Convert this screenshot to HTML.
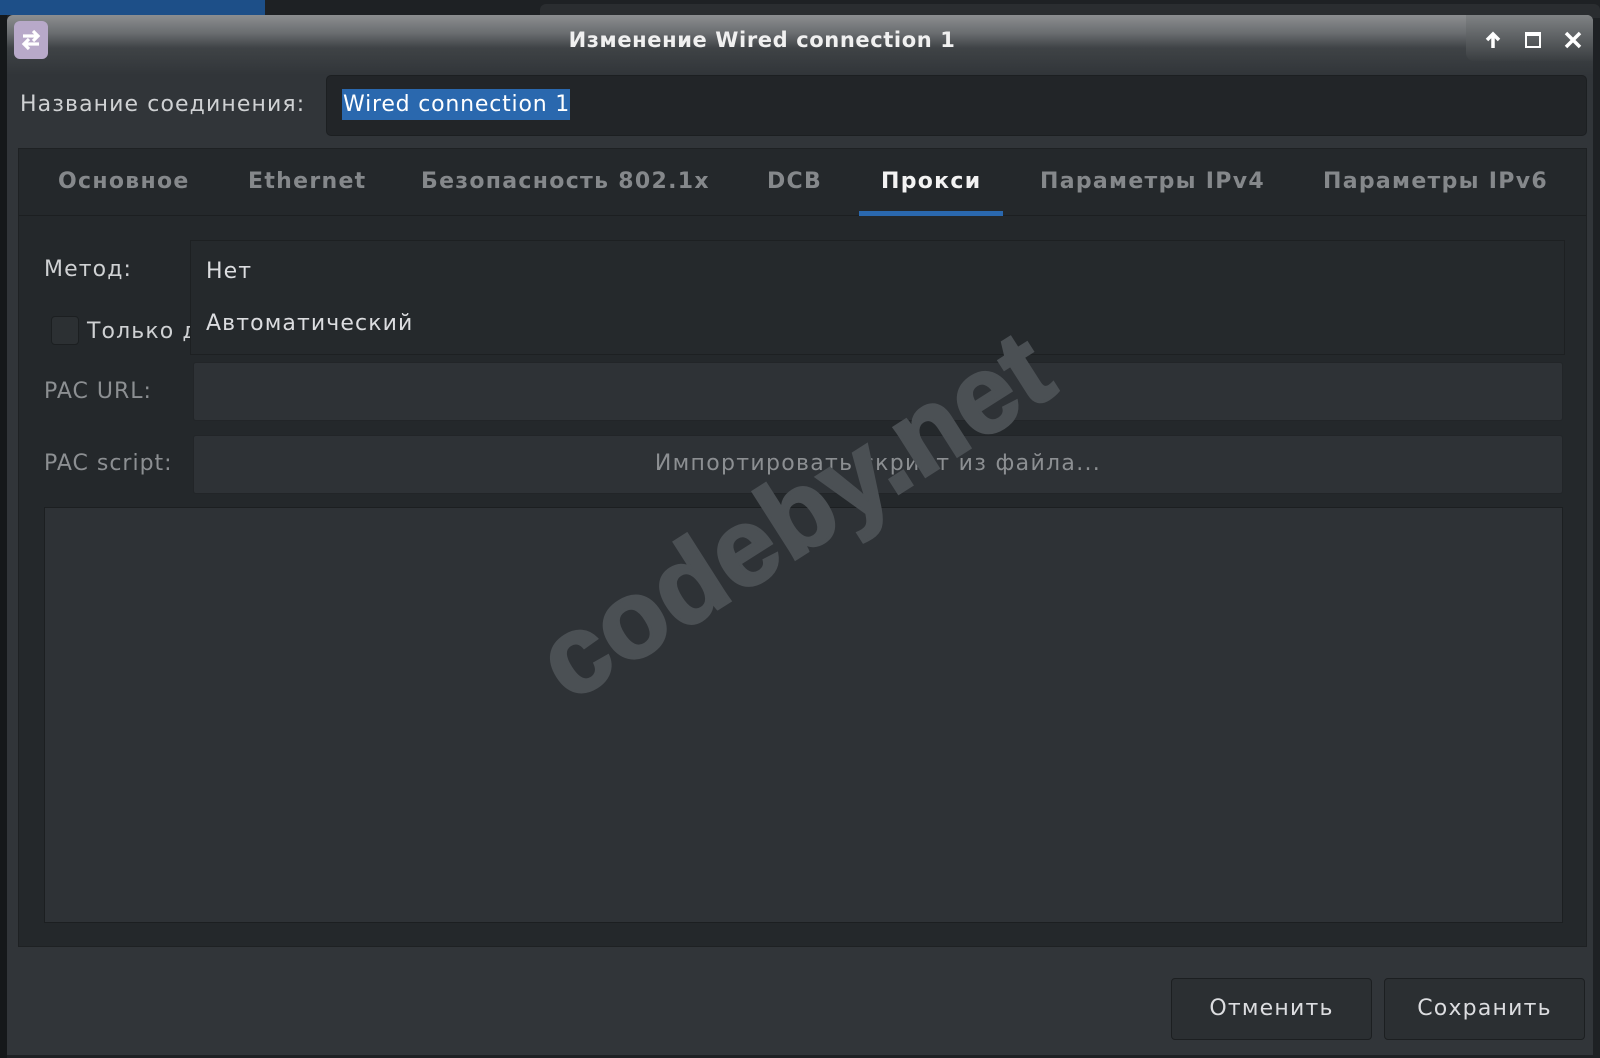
<!DOCTYPE html>
<html><head><meta charset="utf-8"><style>
*{box-sizing:border-box;margin:0;padding:0}
body{width:1600px;height:1058px;overflow:hidden;background:#1e2124;font-family:"DejaVu Sans","Liberation Sans",sans-serif;position:relative}
.a{position:absolute}
.lbl{color:#cfd1d3;font-size:22px;letter-spacing:1.1px}
.dim{color:#8c8f92;font-size:22px;letter-spacing:1px}
.tab{position:absolute;top:169px;font-size:22px;font-weight:bold;color:#85888b;letter-spacing:1.3px}
</style></head><body>
<div class="a" style="left:0;top:0;width:265px;height:15px;background:#1d4f88"></div>
<div class="a" style="left:540px;top:4px;width:1060px;height:14px;background:#2a2d30;border-radius:6px 6px 0 0"></div>
<div class="a" style="left:0;top:15px;width:7px;height:1043px;background:#15181a"></div>
<div class="a" style="left:7px;top:15px;width:1586px;height:1040px;background:#313539;border-radius:6px 6px 0 0"></div>
<div class="a" style="left:7px;top:15px;width:1586px;height:60px;background:linear-gradient(#8c8e90 0,#6a6d70 30%,#3f4346 55%,#313539 100%);border-radius:6px 6px 0 0"></div>
<div class="a" style="left:1466px;top:15px;width:127px;height:46px;background:linear-gradient(#7f8284,#3a3e41);border-radius:0 6px 0 8px"></div>
<div class="a" style="left:14px;top:21px;width:34px;height:38px;background:#b8a9c9;border-radius:6px"></div>
<svg class="a" style="left:17px;top:26px" width="28" height="28" viewBox="0 0 28 28"><path d="M6 10h14M16 5l5 5-5 5M22 18H8M12 13l-5 5 5 5" stroke="#fff" stroke-width="3.2" fill="none"/></svg>
<div class="a" style="left:0;width:1524px;top:28px;text-align:center;color:#f0f0f0;font-weight:bold;font-size:21px;letter-spacing:0.6px">Изменение Wired connection 1</div>
<svg class="a" style="left:1483px;top:30px" width="20" height="20" viewBox="0 0 20 20"><path d="M10 18V5M4 10l6-6 6 6" stroke="#fff" stroke-width="3.5" fill="none"/></svg>
<div class="a" style="left:1525px;top:32px;width:16px;height:16px;border:2px solid #fff;border-top-width:4px"></div>
<svg class="a" style="left:1563px;top:30px" width="20" height="20" viewBox="0 0 20 20"><path d="M3 3l14 14M17 3L3 17" stroke="#fff" stroke-width="3.5"/></svg>

<div class="a lbl" style="left:20px;top:92px">Название соединения:</div>
<div class="a" style="left:326px;top:75px;width:1261px;height:61px;background:#222528;border:1px solid #1c1f21;border-radius:5px"></div>
<div class="a" style="left:342px;top:89px;width:228px;height:31px;background:#2a68ae"></div>
<div class="a" style="left:343px;top:92px;color:#fff;font-size:22px;letter-spacing:0.8px">Wired connection 1</div>

<div class="a" style="left:18px;top:148px;width:1569px;height:799px;background:#24282b;border:1px solid #1e2123"></div>
<div class="a" style="left:19px;top:215px;width:1567px;height:1px;background:#1c1f21"></div>
<div class="tab" style="left:58px">Основное</div>
<div class="tab" style="left:248px">Ethernet</div>
<div class="tab" style="left:421px">Безопасность 802.1x</div>
<div class="tab" style="left:767px">DCB</div>
<div class="tab" style="left:881px;color:#f3f3f3">Прокси</div>
<div class="tab" style="left:1040px">Параметры IPv4</div>
<div class="tab" style="left:1323px">Параметры IPv6</div>
<div class="a" style="left:859px;top:211px;width:144px;height:5px;background:#2a68ae"></div>

<div class="a lbl" style="left:44px;top:257px">Метод:</div>
<div class="a" style="left:51px;top:316px;width:28px;height:29px;background:#2c3033;border:1px solid #1c1f21;border-radius:4px"></div>
<div class="a lbl" style="left:87px;top:319px">Только для</div>
<div class="a" style="left:190px;top:240px;width:1375px;height:115px;background:#25292c;border:1px solid #1d2022"></div>
<div class="a lbl" style="left:206px;top:259px;color:#dcdde0">Нет</div>
<div class="a lbl" style="left:206px;top:311px;color:#dcdde0">Автоматический</div>

<div class="a dim" style="left:44px;top:379px">PAC URL:</div>
<div class="a" style="left:193px;top:362px;width:1370px;height:59px;background:#2e3236;border:1px solid #222528;border-radius:3px"></div>
<div class="a dim" style="left:44px;top:451px">PAC script:</div>
<div class="a" style="left:193px;top:435px;width:1370px;height:59px;background:#2e3236;border:1px solid #222528;border-radius:3px"></div>
<div class="a dim" style="left:193px;width:1370px;top:451px;text-align:center;letter-spacing:1.3px">Импортировать скрипт из файла...</div>
<div class="a" style="left:44px;top:507px;width:1519px;height:416px;background:#2e3236;border:1px solid #1c1f21"></div>

<div class="a" style="left:1171px;top:978px;width:201px;height:62px;background:#2b2f32;border:1px solid #1c1f21;border-radius:4px;color:#dcdde0;font-size:22px;letter-spacing:1.2px;text-align:center;line-height:60px">Отменить</div>
<div class="a" style="left:1384px;top:978px;width:201px;height:62px;background:#2b2f32;border:1px solid #1c1f21;border-radius:4px;color:#dcdde0;font-size:22px;letter-spacing:1.2px;text-align:center;line-height:60px">Сохранить</div>

<div class="a" style="left:795px;top:515px;transform:translate(-50%,-50%) rotate(-32.5deg);font-family:'Liberation Sans',sans-serif;font-weight:bold;font-size:110px;color:#4b5054;white-space:nowrap;letter-spacing:1px;-webkit-text-stroke:3px #4b5054">codeby.net</div>
</body></html>
